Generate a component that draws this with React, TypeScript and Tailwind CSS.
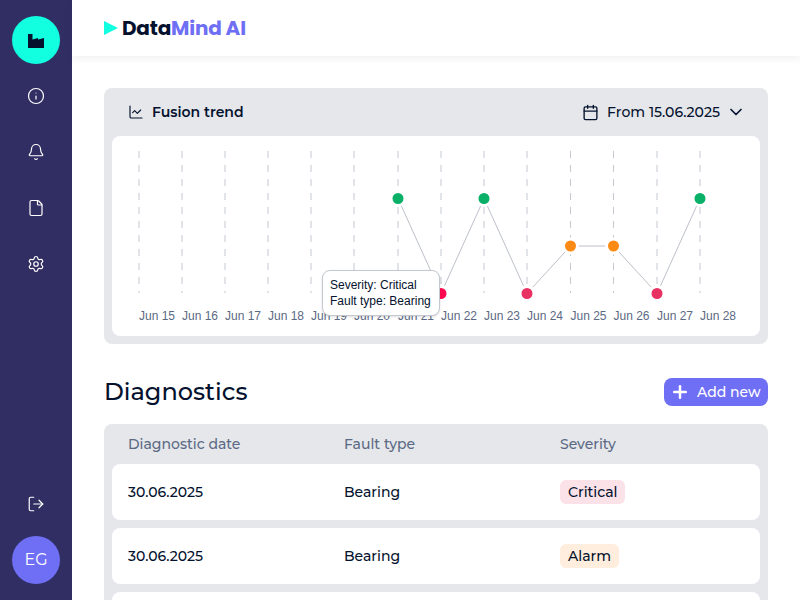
import { Bell, Calendar, ChartLine, ChevronDown, File, Info, LogOut, Plus, Settings } from "lucide-react";

const mont = "font-['Montserrat','Inter',sans-serif]";

const xs = [139, 182, 225, 268, 311, 354, 398, 441, 484, 527, 570.5, 613.5, 657, 700];
const labels = ["Jun 15", "Jun 16", "Jun 17", "Jun 18", "Jun 19", "Jun 20", "Jun 21", "Jun 22", "Jun 23", "Jun 24", "Jun 25", "Jun 26", "Jun 27", "Jun 28"];

// index into xs, y, colour
const points: [number, number, string][] = [
  [6, 198.5, "#0bb068"],
  [7, 293.5, "#ff0a50"],
  [8, 198.5, "#0bb068"],
  [9, 293.5, "#e83262"],
  [10, 246, "#fd8a14"],
  [11, 246, "#fd8a14"],
  [12, 293.5, "#e83262"],
  [13, 198.5, "#0bb068"],
];

function Chart() {
  return (
    <svg width="648" height="200" viewBox="112 136 648 200" className="block">
      {xs.map((x) => (
        <line key={x} x1={x} x2={x} y1={151} y2={293} stroke="#c3c8d1" strokeDasharray="7 7" />
      ))}
      <polyline points={points.map(([i, y]) => `${xs[i]},${y}`).join(" ")} fill="none" stroke="#bcc0c9" />
      {points.map(([i, y, c]) => (
        <circle key={i} cx={xs[i]} cy={y} r={7} fill={c} stroke="#fff" strokeWidth={3} />
      ))}
      {labels.map((l, i) => (
        <text key={l} x={xs[i]} y={320} fontSize={12} fill="#5b6a84" fontFamily="Liberation Sans, Arial, sans-serif">
          {l}
        </text>
      ))}
    </svg>
  );
}

function Row({ date, fault, sev, cls }: { date: string; fault: string; sev: string; cls: string }) {
  return (
    <div className="grid h-14 grid-cols-[216px_216px_1fr] items-center rounded-lg bg-white px-4 text-sm font-medium text-[#04122e]">
      <span>{date}</span>
      <span>{fault}</span>
      <span>
        <span className={`inline-block rounded-md px-2 py-[2px] leading-5 ${cls}`}>{sev}</span>
      </span>
    </div>
  );
}

export default function App() {
  return (
    <div className={`flex h-[600px] w-[800px] overflow-hidden bg-white ${mont}`}>
      <aside className="flex w-[72px] shrink-0 flex-col items-center bg-[#312e63] pt-4 pb-4 text-white">
        <div className="flex size-12 items-center justify-center rounded-full bg-[#12ffe0]">
          <svg width="16" height="14" viewBox="0 0 16 14" className="mt-[1px]">
            <path d="M0 0H4.5V5.5L10 4V5.5L16 4V14H0Z" fill="#04122e" />
          </svg>
        </div>
        <div className="mt-2 flex h-12 items-center justify-center"><Info size={18} strokeWidth={1.6} /></div>
        <div className="mt-2 flex h-12 items-center justify-center"><Bell size={18} strokeWidth={1.6} /></div>
        <div className="mt-2 flex h-12 items-center justify-center"><File size={18} strokeWidth={1.6} /></div>
        <div className="mt-2 flex h-12 items-center justify-center"><Settings size={18} strokeWidth={1.6} /></div>
        <div className="mt-auto mb-2 flex h-12 items-center justify-center"><LogOut size={18} strokeWidth={1.6} /></div>
        <div className="flex size-12 items-center justify-center rounded-full bg-[#6f6ff5] text-base">EG</div>
      </aside>
      <div className="min-w-0 flex-1">
        <header className="flex h-14 items-center gap-[4px] bg-white pl-8 shadow-[0_2px_8px_rgba(30,40,70,0.08)]">
          <svg width="14" height="14" viewBox="0 0 14 14" className="mb-[1px]"><path d="M0 0L14 7L0 14Z" fill="#12ffe0" /></svg>
          <span className="font-['Poppins','Inter',sans-serif] text-xl font-bold tracking-[-0.2px] text-[#04122e]">
            Data<span className="text-[#6f6ff5]">Mind AI</span>
          </span>
        </header>
        <main className="relative px-8 pt-8">
          <section className="rounded-lg bg-[#e5e7eb] px-2 pb-2">
            <div className="flex h-12 items-center justify-between pr-[14px] pl-4 text-[#04122e]">
              <div className="flex items-center gap-2 text-sm font-semibold">
                <ChartLine size={16} strokeWidth={1.75} />
                Fusion trend
              </div>
              <div className="flex items-center text-sm font-medium">
                <Calendar size={17} strokeWidth={1.9} className="mr-2" />
                From 15.06.2025
                <ChevronDown size={20} strokeWidth={2} className="ml-[6px]" />
              </div>
            </div>
            <div className="relative h-[200px] overflow-hidden rounded-lg bg-white">
              <Chart />
              <div className="absolute top-[134px] left-[210px] w-[118px] rounded-lg border border-[#c3c8d1] bg-white px-[7px] py-[6px] font-['Liberation_Sans',Arial,sans-serif] text-xs leading-4 whitespace-nowrap text-[#04122e] shadow-sm">
                <div>Severity: Critical</div>
                <div>Fault type: Bearing</div>
              </div>
            </div>
          </section>

          <div className="mt-[34px] flex h-7 items-center justify-between">
            <h1 className="text-2xl font-medium text-[#04122e]">Diagnostics</h1>
            <button className="flex h-7 w-[104px] items-center gap-[7px] rounded-lg bg-[#6f6ff5] pl-[6px] text-sm font-medium text-white">
              <Plus size={20} strokeWidth={3} />
              Add new
            </button>
          </div>

          <section className="mt-[18px] rounded-lg bg-[#e5e7eb] px-2">
            <div className="grid h-10 grid-cols-[216px_216px_1fr] items-center px-4 text-sm font-medium text-[#5b6a84]">
              <span>Diagnostic date</span>
              <span>Fault type</span>
              <span>Severity</span>
            </div>
            <div className="flex flex-col gap-2">
              <Row date="30.06.2025" fault="Bearing" sev="Critical" cls="bg-[#fbe1e8]" />
              <Row date="30.06.2025" fault="Bearing" sev="Alarm" cls="bg-[#ffeddd]" />
              <Row date="" fault="" sev="" cls="" />
            </div>
          </section>
        </main>
      </div>
    </div>
  );
}
